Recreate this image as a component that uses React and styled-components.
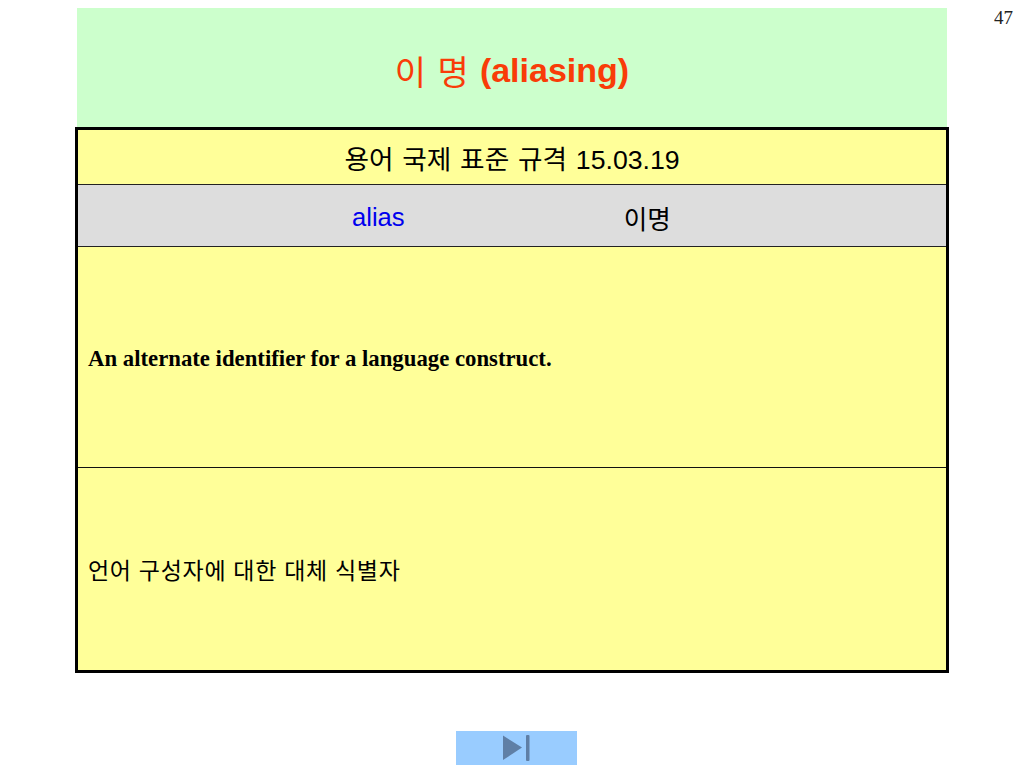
import styled, { createGlobalStyle } from "styled-components";

const GlobalStyle = createGlobalStyle`
  html, body {
    margin: 0;
    padding: 0;
    background: #fff;
  }
`;

const sans = `"Liberation Sans", "Noto Sans CJK KR", sans-serif`;

const App = () => {
  return (
    <Slide>
      <GlobalStyle />
      <Header>
        <Title>
          <TitleHangul>이 명</TitleHangul> <b>(aliasing)</b>
        </Title>
        <PageNumber>47</PageNumber>
      </Header>
      <Table>
        <HeadRow>용어 국제 표준 규격 15.03.19</HeadRow>
        <TermRow>
          <Term>alias</Term>
          <Translation>이명</Translation>
        </TermRow>
        <EnglishRow>An alternate identifier for a language construct.</EnglishRow>
        <KoreanRow>언어 구성자에 대한 대체 식별자</KoreanRow>
      </Table>
      <Footer>
        <NextButton aria-label="next">
          <svg width="28" height="28" viewBox="0 0 28 28">
            <path d="M1 1.5 L20 13.5 L1 26 Z" fill="#5f7fa6" />
            <rect x="24" y="1" width="3.5" height="26" rx="1" fill="#5f7fa6" />
          </svg>
        </NextButton>
      </Footer>
    </Slide>
  );
};

export default App;

const Slide = styled.div`
  width: 1024px;
  height: 768px;
  overflow: hidden;
  padding-top: 8px;
  box-sizing: border-box;
`;

const Header = styled.div`
  display: flex;
  height: 119px;
  padding-left: 77px;
`;

const Title = styled.h1`
  width: 870px;
  margin: 0;
  display: flex;
  justify-content: center;
  align-items: center;
  gap: 11px;
  padding-top: 5px;
  box-sizing: border-box;
  background: #ccffcc;
  color: #f93c08;
  font-family: ${sans};
  font-size: 34px;
  font-weight: 400;
`;

const TitleHangul = styled.span`
  word-spacing: 2px;
`;

const PageNumber = styled.div`
  margin-left: 47px;
  font-family: "Liberation Serif", serif;
  font-size: 19px;
  line-height: 20px;
  color: #222;
`;

const Table = styled.div`
  width: 874px;
  height: 546px;
  margin-left: 75px;
  box-sizing: border-box;
  border: 3px solid #000;
  background: #ffff99;
  display: flex;
  flex-direction: column;
  color: #000;
  font-family: ${sans};
`;

const HeadRow = styled.div`
  height: 55px;
  flex: none;
  display: flex;
  justify-content: center;
  align-items: center;
  font-size: 26.67px;
  word-spacing: 1.4px;
  border-bottom: 1px solid #222;
  box-sizing: border-box;
`;

const TermRow = styled.div`
  height: 62px;
  flex: none;
  display: flex;
  align-items: center;
  padding-top: 4px;
  background: #dddddd;
  border-bottom: 1px solid #222;
  box-sizing: border-box;
  font-size: 25.6px;
`;

const Term = styled.span`
  margin-left: 274px;
  color: #0000ee;
`;

const Translation = styled.span`
  margin-left: 219px;
`;

const EnglishRow = styled.div`
  height: 221px;
  flex: none;
  display: flex;
  align-items: center;
  padding: 4px 10px 0;
  box-sizing: border-box;
  border-bottom: 1px solid #111;
  font-family: "Liberation Serif", serif;
  font-weight: 700;
  font-size: 22.75px;
`;

const KoreanRow = styled.div`
  flex: 1;
  display: flex;
  align-items: center;
  padding: 0 10px;
  font-size: 23px;
  letter-spacing: 0.7px;
`;

const Footer = styled.div`
  display: flex;
  justify-content: center;
  padding-top: 58px;
  padding-left: 8px;
`;

const NextButton = styled.div`
  width: 121px;
  height: 34px;
  background: #99ccff;
  display: flex;
  justify-content: center;
  align-items: center;
`;
